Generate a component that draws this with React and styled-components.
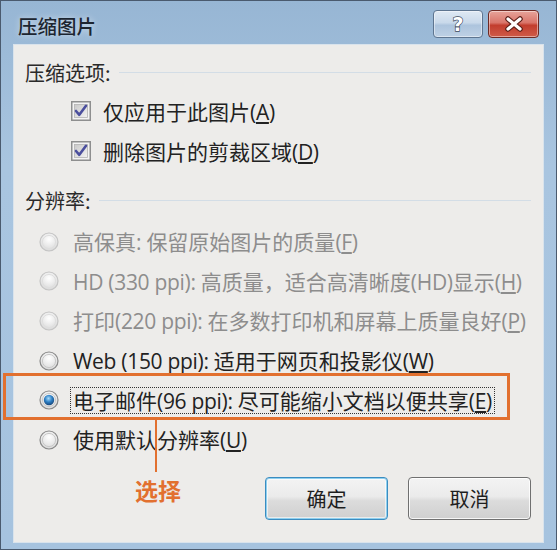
import React from "react";
import styled, { createGlobalStyle } from "styled-components";

const Global = createGlobalStyle`
  html, body { margin: 0; padding: 0; background: #ffffff; }
  body { font-family: "Open Sans", "Noto Sans CJK SC", sans-serif; }
`;

const Window = styled.div`
  position: relative;
  width: 557px;
  height: 550px;
  box-sizing: border-box;
  border: 1px solid #4a5a6e;
  background: linear-gradient(180deg, #97b6d4 0%, #a9c5e0 30%, #a6c3df 100%);
  display: flex;
  flex-direction: column;
  overflow: hidden;
`;

const TitleBar = styled.div`
  height: 43px;
  display: flex;
  align-items: flex-start;
  justify-content: space-between;
  padding: 0 17px 0 17px;
`;

const Title = styled.div`
  font-family: "Noto Sans CJK SC", sans-serif;
  font-size: 19.5px;
  font-weight: 500;
  line-height: 24px;
  margin-top: 13px;
  color: #1c2530;
  text-shadow: 0 0 6px rgba(255,255,255,0.6);
`;

const TitleButtons = styled.div`
  display: flex;
  gap: 5px;
  margin-top: 9px;
`;

const CaptionButton = styled.div`
  width: ${p => (p.$close ? 51 : 50)}px;
  height: 28px;
  box-sizing: border-box;
  border-radius: 4px;
  border: 1px solid ${p => (p.$close ? "#6e2a24" : "#5e7590")};
  background: ${p =>
    p.$close
      ? "linear-gradient(180deg, #e7a49a 0%, #d9756a 45%, #c23d2e 55%, #cf5b48 100%)"
      : "linear-gradient(180deg, #dfe9f4 0%, #c9d9ea 45%, #adc4dd 55%, #bed1e5 100%)"};
  box-shadow: inset 0 0 0 1px rgba(255,255,255,0.45);
  display: flex;
  align-items: center;
  justify-content: center;
`;

const Panel = styled.div`
  flex: 1;
  margin: 0 12px 6px 12px;
  background: #edecea;
  border: 1px solid #d9e3ec;
  display: flex;
  flex-direction: column;
  padding: 15px 10px 0 11px;
`;

const SectionHeader = styled.div`
  display: flex;
  align-items: center;
  height: 24px;
  gap: 8px;
  margin-top: ${p => p.$mt || 0}px;
`;

const SectionLabel = styled.span`
  font-family: "Noto Sans CJK SC", sans-serif;
  font-size: 20px;
  color: #2a2a2a;
  white-space: nowrap;
`;

const Rule = styled.div`
  flex: 1;
  height: 1px;
  background: #d3dde6;
  margin-right: 2px;
`;

const Group = styled.div`
  display: flex;
  flex-direction: column;
  padding-left: ${p => p.$indent}px;
  margin-top: ${p => p.$mt}px;
`;

const Row = styled.div`
  display: flex;
  align-items: center;
  height: ${p => p.$h}px;
  gap: ${p => p.$gap}px;
`;

const Label = styled.span`
  font-family: "Open Sans", "Noto Sans CJK SC", sans-serif;
  font-size: 21px;
  letter-spacing: -0.3px;
  white-space: nowrap;
  color: ${p => (p.$disabled ? "#8d8d8d" : "#222")};
  padding: 0 2px;
  line-height: 24px;
  margin-left: -3px;
  border: 1px dotted ${p => (p.$focus ? "#333" : "transparent")};
  u { text-decoration: underline; text-underline-offset: 2px; }
`;

const CJK = styled.span`
  font-family: "Noto Sans CJK SC", sans-serif;
  letter-spacing: 0;
`;

const Footer = styled.div`
  display: flex;
  justify-content: flex-end;
  gap: 20px;
  margin-top: auto;
  margin-bottom: 22px;
  padding-right: 2px;
`;

const Button = styled.div`
  width: 123px;
  height: 43px;
  box-sizing: border-box;
  border-radius: 4px;
  border: 1px solid ${p => (p.$default ? "#3b8cc0" : "#707070")};
  box-shadow: ${p =>
    p.$default
      ? "inset 0 0 0 1px #8fd0ef, inset 0 0 0 2px rgba(255,255,255,0.6)"
      : "inset 0 0 0 1px rgba(255,255,255,0.8)"};
  background: linear-gradient(180deg, #f3f3f3 0%, #ebebeb 45%, #dcdcdc 55%, #cfcfcf 100%);
  display: flex;
  align-items: center;
  justify-content: center;
  font-family: "Noto Sans CJK SC", sans-serif;
  font-size: 20px;
  color: #1e1e1e;
`;

const Annotation = styled.div`
  position: absolute;
  left: 2px;
  top: 372px;
  width: 507px;
  height: 47px;
  box-sizing: border-box;
  border: 3px solid #e2702f;
  pointer-events: none;
`;

const Leader = styled.div`
  position: absolute;
  left: 154px;
  top: 419px;
  width: 2px;
  height: 52px;
  background: #e2702f;
`;

const AnnotationText = styled.div`
  position: absolute;
  left: 134px;
  top: 472px;
  font-family: "Noto Sans CJK SC", sans-serif;
  font-weight: 700;
  font-size: 23px;
  color: #e2702f;
`;

function Checkbox() {
  return (
    <svg width="20" height="20" viewBox="0 0 20 20">
      <defs>
        <linearGradient id="cbg" x1="0" y1="0" x2="1" y2="1">
          <stop offset="0" stopColor="#c9c9c9" />
          <stop offset="1" stopColor="#f3f3f3" />
        </linearGradient>
      </defs>
      <rect x="0.75" y="0.75" width="18.5" height="18.5" fill="#f4f4f4" stroke="#8e8f8f" strokeWidth="1.5" />
      <rect x="3.5" y="3.5" width="13" height="13" fill="url(#cbg)" stroke="#b4b4b4" strokeWidth="0.8" />
      <path d="M5 10 L8.3 13.8 L15 4.8" fill="none" stroke="#4b4f9e" strokeWidth="2.6" strokeLinejoin="round" strokeLinecap="round" />
    </svg>
  );
}

function Radio({ checked, disabled }) {
  return (
    <svg width="20" height="20" viewBox="0 0 20 20">
      <defs>
        <radialGradient id="rg" cx="0.5" cy="0.35" r="0.7">
          <stop offset="0" stopColor="#ffffff" />
          <stop offset="1" stopColor="#d6d6d6" />
        </radialGradient>
        <radialGradient id="rsel" cx="0.45" cy="0.35" r="0.7">
          <stop offset="0" stopColor="#a8dcfb" />
          <stop offset="0.5" stopColor="#2d7fc4" />
          <stop offset="1" stopColor="#153f70" />
        </radialGradient>
      </defs>
      <circle cx="10" cy="10" r="9" fill="url(#rg)" stroke={disabled ? "#c4c4c4" : "#8a8a8a"} strokeWidth="1.2" />
      <circle cx="10" cy="10" r="6.6" fill="none" stroke={disabled ? "#dedede" : "#c8c8c8"} strokeWidth="1" />
      {checked && <circle cx="10" cy="10" r="5.2" fill="url(#rsel)" />}
    </svg>
  );
}

const radios = [
  { d: true, t: <><CJK>高保真</CJK>: <CJK>保留原始图片的质量</CJK>(<u>F</u>)</> },
  { d: true, t: <>HD (330 ppi): <CJK>高质量，适合高清晰度</CJK>(HD)<CJK>显示</CJK>(<u>H</u>)</> },
  { d: true, t: <><CJK>打印</CJK>(220 ppi): <CJK>在多数打印机和屏幕上质量良好</CJK>(<u>P</u>)</> },
  { t: <>Web (150 ppi): <CJK>适用于网页和投影仪</CJK>(<u>W</u>)</> },
  { c: true, f: true, t: <><CJK>电子邮件</CJK>(96 ppi): <CJK>尽可能缩小文档以便共享</CJK>(<u>E</u>)</> },
  { t: <><CJK>使用默认分辨率</CJK>(<u>U</u>)</> },
];

export default function App() {
  return (
    <>
      <Global />
      <Window>
        <TitleBar>
          <Title>压缩图片</Title>
          <TitleButtons>
            <CaptionButton>
              <svg width="16" height="20" viewBox="0 0 16 20">
                <text x="8" y="17" textAnchor="middle" fontFamily="DejaVu Sans" fontWeight="700" fontSize="19" fill="#ffffff" stroke="#3d4a5c" strokeWidth="1.3" paintOrder="stroke">?</text>
              </svg>
            </CaptionButton>
            <CaptionButton $close>
              <svg width="20" height="16" viewBox="0 0 20 16">
                <path d="M4 3 L16 13 M16 3 L4 13" stroke="#5a1d16" strokeWidth="5.5" strokeLinecap="round" />
                <path d="M4 3 L16 13 M16 3 L4 13" stroke="#ffffff" strokeWidth="3.2" strokeLinecap="round" />
              </svg>
            </CaptionButton>
          </TitleButtons>
        </TitleBar>
        <Panel>
          <SectionHeader>
            <SectionLabel>压缩选项:</SectionLabel>
            <Rule />
          </SectionHeader>
          <Group $indent={46} $mt={7}>
            <Row $h={40} $gap={12}>
              <Checkbox />
              <Label><CJK>仅应用于此图片</CJK>(<u>A</u>)</Label>
            </Row>
            <Row $h={40} $gap={12}>
              <Checkbox />
              <Label><CJK>删除图片的剪裁区域</CJK>(<u>D</u>)</Label>
            </Row>
          </Group>
          <SectionHeader $mt={17}>
            <SectionLabel>分辨率:</SectionLabel>
            <Rule />
          </SectionHeader>
          <Group $indent={14} $mt={10}>
            {radios.map((r, i) => (
              <Row key={i} $h={39.6} $gap={14}>
                <Radio checked={r.c} disabled={r.d} />
                <Label $disabled={r.d} $focus={r.f}>{r.t}</Label>
              </Row>
            ))}
          </Group>
          <Footer>
            <Button $default>确定</Button>
            <Button>取消</Button>
          </Footer>
        </Panel>
        <Annotation />
        <Leader />
        <AnnotationText>选择</AnnotationText>
      </Window>
    </>
  );
}
